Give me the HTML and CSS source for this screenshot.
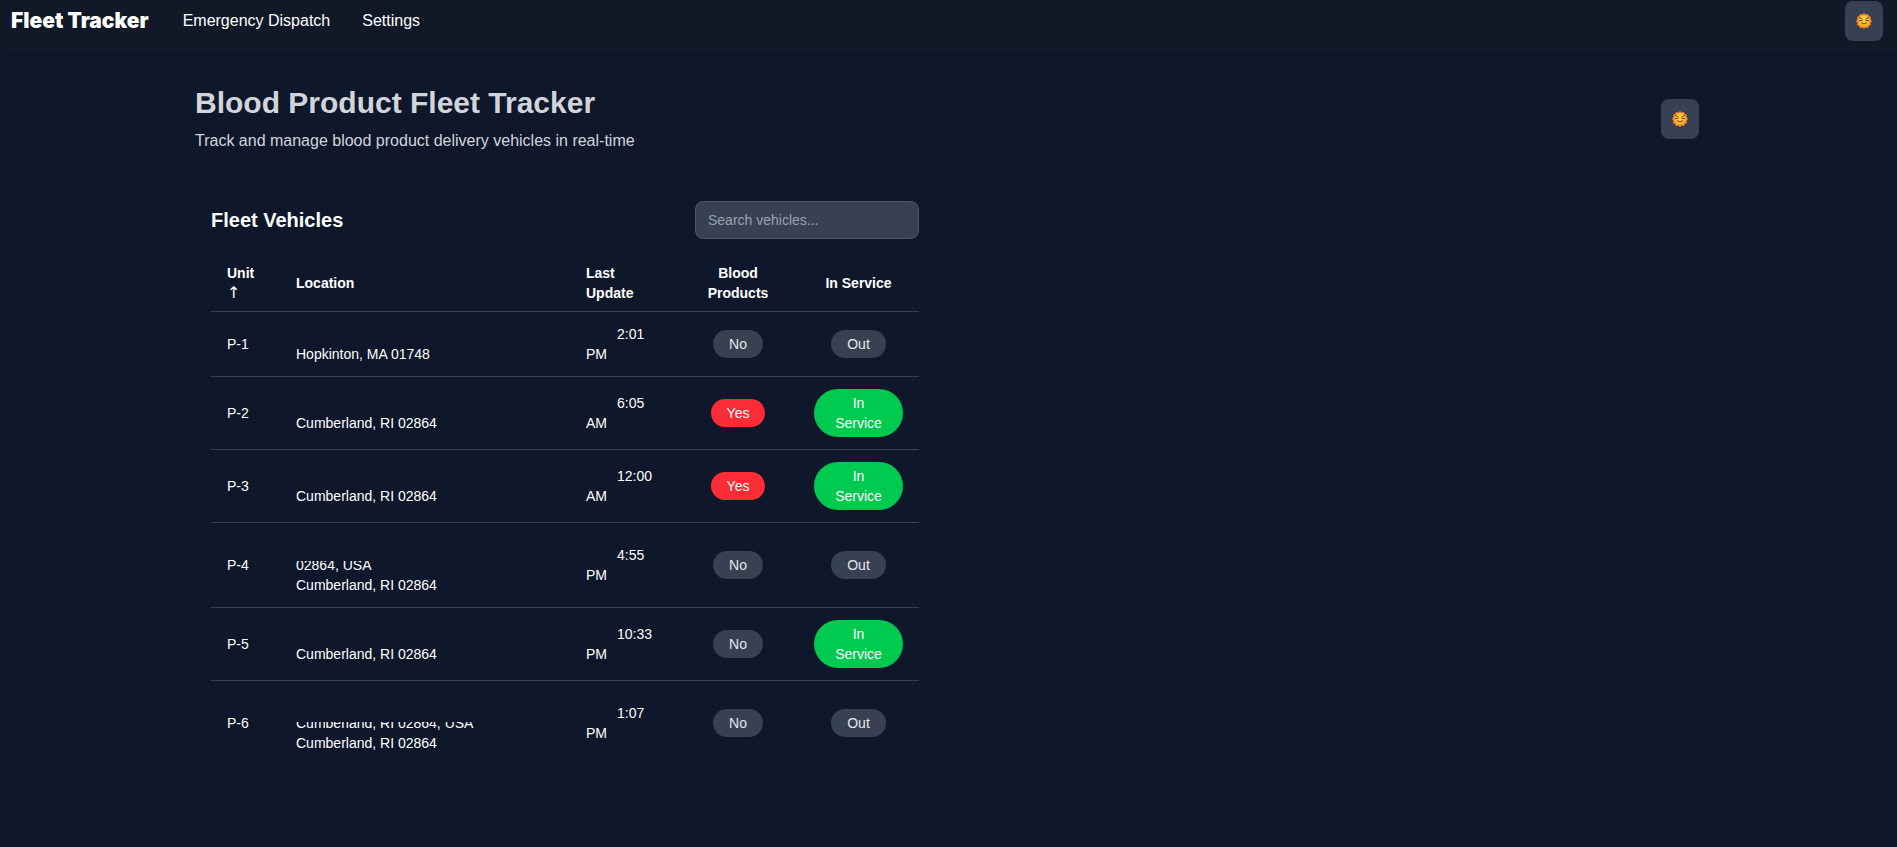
FILE: index.html
```
<!DOCTYPE html>
<html lang="en">
<head>
  <meta charset="UTF-8">
  <title>Fleet Tracker</title>
  <link rel="stylesheet" href="styles.css">
</head>
<body>

  <svg width="0" height="0" class="sprite" aria-hidden="true">
    <symbol id="sun" viewBox="0 0 32 32">
      <path fill="#f8812e" d="M16 0l3 3 5-1 2 4 4 2-1 5 3 3-3 4 1 4-4 2-2 4-5-1-3 3-3-3-5 1-2-4-4-2 1-4-3-4 3-3-1-5 4-2 2-4 5 1z"/>
      <circle cx="16" cy="16" r="12" fill="#fbb41f"/>
      <circle cx="16" cy="13" r="8" fill="#fdc93a"/>
      <path fill="none" stroke="#5b4a30" stroke-width="2" stroke-linecap="round" d="M7 9l5 3M25 9l-5 3M7 15h5M20 15h5M11 20q5 4 10 0"/>
    </symbol>
  </svg>

  <header class="navbar">
    <a href="#" class="brand">Fleet Tracker</a>
    <nav class="nav-links">
      <a href="#">Emergency Dispatch</a>
      <a href="#">Settings</a>
    </nav>
    <button class="theme-toggle" type="button" aria-label="Toggle theme"><svg><use href="#sun"/></svg></button>
  </header>

  <main class="container">
    <div class="page-header">
      <div>
        <h1>Blood Product Fleet Tracker</h1>
        <p>Track and manage blood product delivery vehicles in real-time</p>
      </div>
      <button class="theme-toggle" type="button" aria-label="Toggle theme"><svg><use href="#sun"/></svg></button>
    </div>

    <div class="grid">
      <section class="card">
        <div class="card-header">
          <h2>Fleet Vehicles</h2>
          <input type="text" class="search" placeholder="Search vehicles..." aria-label="Search vehicles">
        </div>

        <table class="fleet">
          <colgroup>
            <col class="col-unit">
            <col class="col-location">
            <col class="col-update">
            <col class="col-blood">
            <col class="col-service">
          </colgroup>
          <thead>
            <tr>
              <th>Unit <span class="sort">↑</span></th>
              <th>Location</th>
              <th>Last Update</th>
              <th class="center">Blood Products</th>
              <th class="center">In Service</th>
            </tr>
          </thead>
          <tbody>
            <tr>
              <td>P-1</td>
              <td class="location"><br>Hopkinton, MA 01748</td>
              <td class="time">2:01<br>PM</td>
              <td class="center"><button type="button" class="pill">No</button></td>
              <td class="center"><button type="button" class="pill">Out</button></td>
            </tr>
            <tr>
              <td>P-2</td>
              <td class="location"><br>Cumberland, RI 02864</td>
              <td class="time">6:05<br>AM</td>
              <td class="center"><button type="button" class="pill red">Yes</button></td>
              <td class="center"><button type="button" class="pill green">In Service</button></td>
            </tr>
            <tr>
              <td>P-3</td>
              <td class="location"><br>Cumberland, RI 02864</td>
              <td class="time">12:00<br>AM</td>
              <td class="center"><button type="button" class="pill red">Yes</button></td>
              <td class="center"><button type="button" class="pill green">In Service</button></td>
            </tr>
            <tr>
              <td>P-4</td>
              <td class="location"><br><span class="street">02864, USA</span>Cumberland, RI 02864</td>
              <td class="time">4:55<br>PM</td>
              <td class="center"><button type="button" class="pill">No</button></td>
              <td class="center"><button type="button" class="pill">Out</button></td>
            </tr>
            <tr>
              <td>P-5</td>
              <td class="location"><br>Cumberland, RI 02864</td>
              <td class="time">10:33<br>PM</td>
              <td class="center"><button type="button" class="pill">No</button></td>
              <td class="center"><button type="button" class="pill green">In Service</button></td>
            </tr>
            <tr>
              <td>P-6</td>
              <td class="location"><br><span class="street half">Cumberland, RI 02864, USA</span>Cumberland, RI 02864</td>
              <td class="time">1:07<br>PM</td>
              <td class="center"><button type="button" class="pill">No</button></td>
              <td class="center"><button type="button" class="pill">Out</button></td>
            </tr>
          </tbody>
        </table>
      </section>
    </div>
  </main>

</body>
</html>
```
FILE: styles.css
```
* {
  box-sizing: border-box;
}
body {
  margin: 0;
  padding-right: 3px;
  background-color: #0f172a;
  color: #fff;
  font-family: "Liberation Sans", Arial, sans-serif;
  font-size: 16px;
  line-height: 24px;
}
h1, h2, p {
  margin: 0;
}
a {
  color: #fff;
  text-decoration: none;
}
.sprite {
  position: absolute;
}
.navbar {
  display: flex;
  align-items: flex-start;
  height: 53px;
  padding: 1px 11px;
  margin-right: -3px;
  background-color: #111827;
  box-shadow: 0 1px 3px rgba(0, 0, 0, 0.1);
}
.brand {
  font-family: Inter, "Liberation Sans", sans-serif;
  font-size: 21px;
  line-height: 40px;
  font-weight: 900;
}
.nav-links {
  display: flex;
  gap: 32px;
  margin-left: 34px;
  line-height: 40px;
}
.theme-toggle {
  display: flex;
  align-items: center;
  justify-content: center;
  width: 38px;
  height: 40px;
  padding: 0;
  border: none;
  border-radius: 8px;
  background-color: #374151;
  cursor: pointer;
}
.theme-toggle svg {
  width: 16px;
  height: 16px;
}
.navbar .theme-toggle {
  margin-left: auto;
  margin-right: 3px;
}
.container {
  max-width: 1504px;
  margin: 0 auto;
  padding: 32px 0;
}
.page-header {
  display: flex;
  align-items: center;
  justify-content: space-between;
  margin-bottom: 32px;
  color: #d1d5db;
}
h1 {
  margin-bottom: 8px;
  font-size: 30px;
  line-height: 36px;
}
.grid {
  display: grid;
  grid-template-columns: 1fr 1fr;
  gap: 24px;
}
.card {
  padding: 16px;
  border-radius: 8px;
  box-shadow: 0 1px 3px rgba(0, 0, 0, 0.1);
}
.card-header {
  display: flex;
  align-items: center;
  justify-content: space-between;
  margin-bottom: 16px;
}
h2 {
  font-size: 20px;
  line-height: 28px;
}
.search {
  width: 224px;
  height: 38px;
  padding: 8px 12px;
  border: 1px solid #4b5563;
  border-radius: 8px;
  background-color: #374151;
  color: #fff;
  font: 14px "Liberation Sans", Arial, sans-serif;
}
.search::placeholder {
  color: #99a1af;
}
.fleet {
  width: 100%;
  table-layout: fixed;
  border-collapse: collapse;
  font-size: 14px;
  line-height: 20px;
}
.col-unit {
  width: 69px;
}
.col-update {
  width: 108px;
}
.col-blood {
  width: 120px;
}
.col-service {
  width: 121px;
}
.fleet th {
  padding: 8px 16px;
  text-align: left;
}
.fleet td {
  padding: 12px 16px;
}
.fleet tr {
  border-bottom: 1px solid #374151;
}
.fleet tbody tr:last-child {
  border-bottom: none;
}
.fleet .center {
  text-align: center;
}
.sort {
  display: block;
  font-family: "DejaVu Sans", sans-serif;
  font-size: 16px;
  font-weight: normal;
}
.time {
  text-indent: 31px;
}
.street {
  display: block;
  clip-path: inset(6px 0 0 0);
}
.street.half {
  clip-path: inset(9px 0 0 0);
}
.pill {
  display: inline-block;
  padding: 4px 16px;
  border: none;
  border-radius: 24px;
  background-color: #374151;
  color: #e5e7eb;
  font: 14px/20px "Liberation Sans", Arial, sans-serif;
  vertical-align: middle;
  cursor: pointer;
}
.pill.red {
  background-color: #fb2c36;
  color: #fff;
}
.pill.green {
  background-color: #00c950;
  color: #fff;
}
```
